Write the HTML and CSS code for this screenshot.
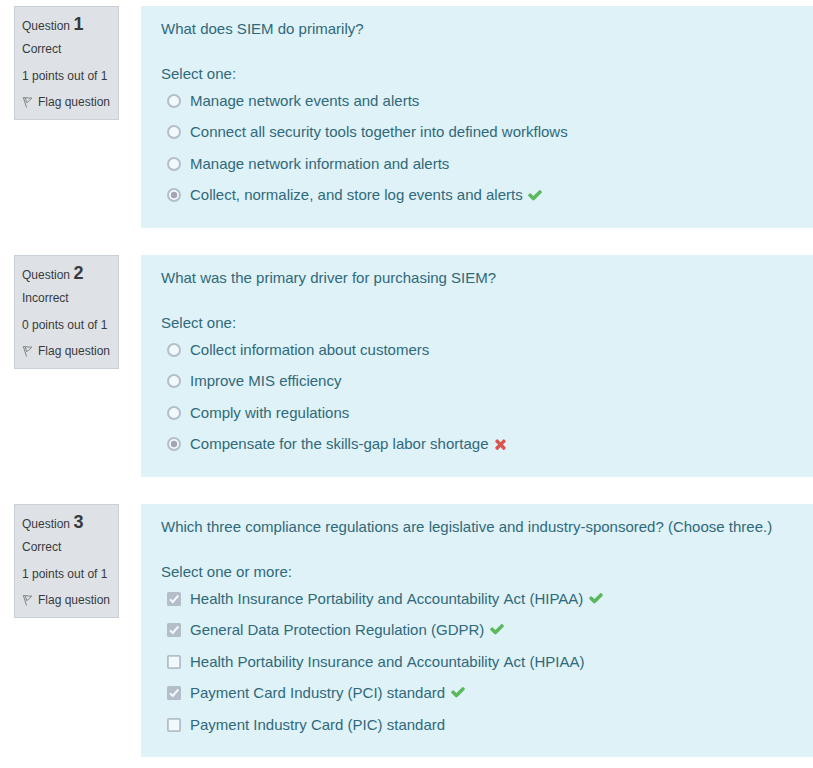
FILE: index.html
```
<!DOCTYPE html>
<html lang="en"><head><meta charset="utf-8"><title>Quiz review</title><link rel="stylesheet" href="styles.css"></head>
<body>
<svg class="defs" width="0" height="0"><defs>
<symbol id="flag" viewBox="0 0 12 14"><path d="M1.300 2.300L4.500 12.500M1.500 2.800C4 1.800 6 3.800 9.800 3C8 4 8 6.500 4.500 7.500M3.500 3L4.500 7.500" fill="none" stroke="#777" stroke-width=".9"/></symbol>
<symbol id="check" viewBox="0 0 1792 1792"><path fill="#5cb85c" d="M1671 566q0 40-28 68l-724 724-136 136q-28 28-68 28t-68-28l-136-136-362-362q-28-28-28-68t28-68l136-136q28-28 68-28t68 28l294 295 656-657q28-28 68-28t68 28l136 136q28 28 28 68z"/></symbol>
<symbol id="cross" viewBox="0 0 1408 1792"><path fill="#d9534f" d="M1298 1322q0 40-28 68l-136 136q-28 28-68 28t-68-28l-294-294-294 294q-28 28-68 28t-68-28l-136-136q-28-28-28-68t28-68l294-294-294-294q-28-28-28-68t28-68l136-136q28-28 68-28t68 28l294 294 294-294q28-28 68-28t68 28l136 136q28 28 28 68t-28 68l-294 294 294 294q28 28 28 68z"/></symbol>
<symbol id="off" viewBox="0 0 14 14"><circle cx="7" cy="7" r="6" fill="#f1f9fc" stroke="#b4bec9" stroke-width="2"/></symbol>
<symbol id="on" viewBox="0 0 14 14"><circle cx="7" cy="7" r="6" fill="#f1f9fc" stroke="#b4bec9" stroke-width="2"/><circle cx="7" cy="7" r="3.200" fill="#a4a5b4"/></symbol>
<symbol id="empty" viewBox="0 0 14 14"><rect x=".9" y=".9" width="12.200" height="12.200" rx="1" fill="#f1f9fc" stroke="#b4bec9" stroke-width="1.800"/></symbol>
<symbol id="ticked" viewBox="0 0 14 14"><rect width="14" height="14" rx="1.500" fill="#b4bec9"/><path d="M3 7.300L5.800 10L11.300 3.500" fill="none" stroke="#f1f9fc" stroke-width="2"/></symbol>
</defs></svg>
<main>
<section class="question"><aside class="info"><h3>Question <b>1</b></h3><p class="state">Correct</p><p class="grade">1 points out of 1</p><p class="flag"><svg><use href="#flag"/></svg>Flag question</p></aside>
<div class="content"><p class="text">What does SIEM do primarily?</p><p class="prompt">Select one:</p><ul>
<li><svg class="input"><use href="#off"/></svg><span>Manage network events and alerts</span></li>
<li><svg class="input"><use href="#off"/></svg><span>Connect all security tools together into defined workflows</span></li>
<li><svg class="input"><use href="#off"/></svg><span>Manage network information and alerts</span></li>
<li><svg class="input"><use href="#on"/></svg><span>Collect, normalize, and store log events and alerts</span><svg class="mark"><use href="#check"/></svg></li></ul></div></section>
<section class="question"><aside class="info"><h3>Question <b>2</b></h3><p class="state">Incorrect</p><p class="grade">0 points out of 1</p><p class="flag"><svg><use href="#flag"/></svg>Flag question</p></aside>
<div class="content"><p class="text">What was the primary driver for purchasing SIEM?</p><p class="prompt">Select one:</p><ul>
<li><svg class="input"><use href="#off"/></svg><span>Collect information about customers</span></li>
<li><svg class="input"><use href="#off"/></svg><span>Improve MIS efficiency</span></li>
<li><svg class="input"><use href="#off"/></svg><span>Comply with regulations</span></li>
<li><svg class="input"><use href="#on"/></svg><span>Compensate for the skills-gap labor shortage</span><svg class="mark cross"><use href="#cross"/></svg></li></ul></div></section>
<section class="question"><aside class="info"><h3>Question <b>3</b></h3><p class="state">Correct</p><p class="grade">1 points out of 1</p><p class="flag"><svg><use href="#flag"/></svg>Flag question</p></aside>
<div class="content"><p class="text">Which three compliance regulations are legislative and industry-sponsored? (Choose three.)</p><p class="prompt">Select one or more:</p><ul>
<li><svg class="input box"><use href="#ticked"/></svg><span>Health Insurance Portability and <span class="word">Accountability</span> <span class="word">Act</span> (HIPAA)</span><svg class="mark"><use href="#check"/></svg></li>
<li><svg class="input box"><use href="#ticked"/></svg><span>General Data Protection Regulation (GDPR)</span><svg class="mark"><use href="#check"/></svg></li>
<li><svg class="input box"><use href="#empty"/></svg><span>Health Portability Insurance and <span class="word">Accountability</span> <span class="word">Act</span> (HPIAA)</span></li>
<li><svg class="input box"><use href="#ticked"/></svg><span>Payment Card Industry (PCI) standard</span><svg class="mark"><use href="#check"/></svg></li>
<li><svg class="input box"><use href="#empty"/></svg><span>Payment Industry Card (PIC) standard</span></li></ul></div></section>
</main></body></html>
```
FILE: styles.css
```
*{box-sizing:border-box;margin:0;padding:0}
body{font-family:"Liberation Sans",Arial,sans-serif;background:#fff}
.defs{position:absolute}
main{display:flex;flex-direction:column;gap:27px;padding:6px 0 0 14px}
.question{display:flex;align-items:flex-start;gap:22px}
.info{width:105px;height:114px;padding:7px;background:#dee2e6;border:1px solid #cad0d7;color:#373a3c;font-size:12px;line-height:18px;white-space:nowrap}
h3{font-size:12px;font-weight:400;line-height:20px}
h3 b{font-size:18px}
.state{margin-top:4px}
.grade{margin-top:9px}
.flag{display:flex;align-items:center;margin-top:8px}
.flag svg{width:12px;height:14px;margin-right:4px}
.content{flex:1;padding:12px 20px 16.500px;background:#def2f8;color:#30697a;font-size:15px;line-height:22.500px}
.prompt{margin-top:22.500px}
ul{list-style:none}
li{display:flex;align-items:center;height:31.480px;padding-left:6px}
.input{width:14px;height:14px;margin:-1px 9px 0 0}
.box{margin:-.2px 9.500px 0 -.5px}
.word{display:inline-block}
.mark{width:16px;height:16px;margin:-2px 0 0 4.400px}
.cross{width:13px;margin-left:5px}
```
